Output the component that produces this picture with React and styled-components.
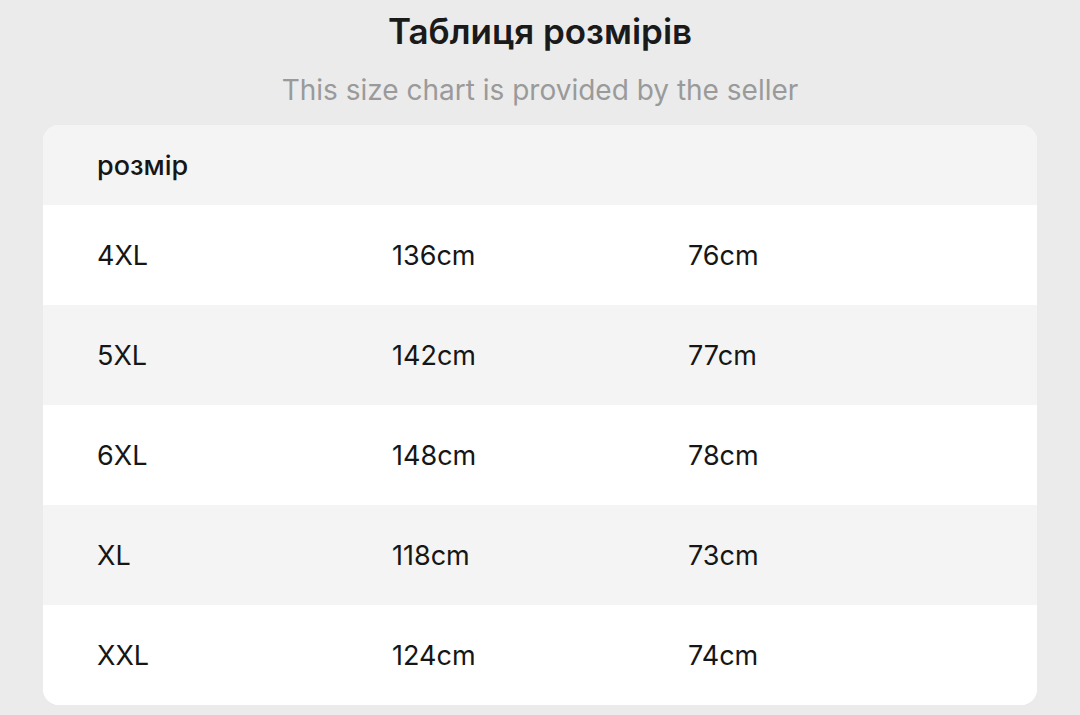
import React from "react";
import styled, { createGlobalStyle } from "styled-components";

const rows = [
    ["4XL", "136cm", "76cm"],
    ["5XL", "142cm", "77cm"],
    ["6XL", "148cm", "78cm"],
    ["XL", "118cm", "73cm"],
    ["XXL", "124cm", "74cm"],
];

const GlobalStyle = createGlobalStyle`
  html, body {
    margin: 0;
    padding: 0;
    background: #ebebeb;
  }
  body {
    font-family: Inter, "Noto Sans", sans-serif;
  }
`;

const App = () => {
    return (
        <Page>
            <GlobalStyle />
            <Title>Таблиця розмірів</Title>
            <Subtitle>This size chart is provided by the seller</Subtitle>
            <Card>
                <HeaderRow>
                    <Cell $head>розмір</Cell>
                </HeaderRow>
                {rows.map((r, i) => (
                    <Row key={r[0]} $shaded={i % 2 === 1}>
                        <Cell>{r[0]}</Cell>
                        <Cell>{r[1]}</Cell>
                        <Cell>{r[2]}</Cell>
                    </Row>
                ))}
            </Card>
        </Page>
    );
};

export default App;

const Page = styled.div`
    width: 1080px;
    height: 715px;
    overflow: hidden;
    display: flex;
    flex-direction: column;
    align-items: center;
    background: #ebebeb;
`;

const Title = styled.h1`
    margin: 9px 0 0;
    height: 44px;
    line-height: 44px;
    font-size: 35px;
    font-weight: 600;
    color: #1a1a1a;
`;

const Subtitle = styled.div`
    margin-top: 19px;
    height: 36px;
    line-height: 36px;
    font-size: 28px;
    font-weight: 400;
    color: #9a9a9a;
`;

const Card = styled.div`
    margin-top: 17px;
    width: 994px;
    background: #ffffff;
    border-radius: 16px;
    overflow: hidden;
`;

const Row = styled.div`
    display: grid;
    grid-template-columns: 295px 296px 1fr;
    align-items: center;
    height: 100px;
    padding-left: 54px;
    background: ${p => (p.$shaded ? "#f4f4f4" : "#ffffff")};
`;

const HeaderRow = styled(Row)`
    height: 80px;
    background: #f4f4f4;
`;

const Cell = styled.div`
    font-size: ${p => (p.$head ? "27px" : "27px")};
    font-weight: ${p => (p.$head ? 500 : 400)};
    color: #161616;
`;
